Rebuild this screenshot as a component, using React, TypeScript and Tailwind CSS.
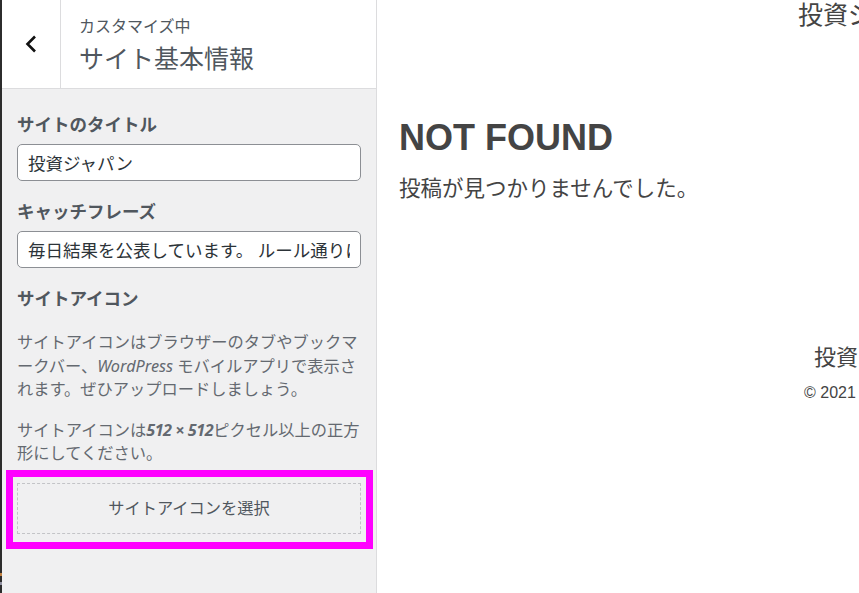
const jp = "font-['Noto_Sans','Noto_Sans_CJK_JP',sans-serif]";

export default function App() {
  return (
    <div className="flex h-[593px] w-[859px] overflow-hidden bg-white">
      {/* strip of the window behind */}
      <div className="flex w-[2px] flex-col justify-end bg-[#2c2c2c] pb-[8px]">
        <div className="h-[3px] bg-[#c08040]" />
        <div className="mt-[6px] h-[3px] bg-[#9090a0]" />
      </div>

      <aside className={`flex w-[375px] shrink-0 flex-col border-r border-[#dcdcde] bg-[#f0f0f1] ${jp}`}>
        <header className="flex h-[89px] border-b border-[#dcdcde] bg-white">
          <button className="flex w-[59px] items-center justify-center border-r border-[#dcdcde] text-black" aria-label="戻る">
            <svg width="12" height="18" viewBox="0 0 12 18" fill="none">
              <polyline points="10,1.5 2.5,9 10,16.5" stroke="#111" strokeWidth="2.6" />
            </svg>
          </button>
          <div className="flex flex-col pl-[18px] pt-[16px] text-[#50575e]">
            <span className="text-[16px] leading-[20px]">カスタマイズ中</span>
            <span className="mt-[6px] text-[25px] leading-[32px]">サイト基本情報</span>
          </div>
        </header>

        <div className="flex flex-col pl-[15px] pr-[9px]">
          <label className="mt-[23px] text-[17.5px] font-bold leading-[24px] text-[#50575e]">サイトのタイトル</label>
          <input
            readOnly
            value="投資ジャパン"
            className="mt-[8px] h-[37px] w-[344px] rounded-[5px] border border-[#8c8f94] bg-white px-[10px] text-[17.5px] text-[#2c3338] outline-none"
          />
          <label className="mt-[18px] text-[17.5px] font-bold leading-[24px] text-[#50575e]">キャッチフレーズ</label>
          <input
            readOnly
            value="毎日結果を公表しています。 ルール通りに投資しています。"
            className="mt-[8px] h-[37px] w-[344px] rounded-[5px] border border-[#8c8f94] bg-white px-[10px] text-[17.5px] text-[#2c3338] outline-none"
          />
          <span className="mt-[18px] text-[17.5px] font-bold leading-[24px] text-[#50575e]">サイトアイコン</span>
          <p className="mt-[21px] text-[16.25px] leading-[23.5px] text-[#646970]">
            サイトアイコンはブラウザーのタブやブックマークバー、<i>WordPress</i> モバイルアプリで表示されます。ぜひアップロードしましょう。
          </p>
          <p className="mt-[17px] text-[16.25px] leading-[23.5px] text-[#646970]">
            サイトアイコンは<b className="tracking-[-0.5px]"><i>512 × 512</i></b>ピクセル以上の正方形にしてください。
          </p>
        </div>

        <div className="ml-[4px] mt-[4px] w-[367px] border-[7px] border-[#ff00ff] pb-[8px] pl-[4px] pr-[5px] pt-[6px]">
          <button className="flex h-[51px] w-full items-center justify-center border border-dashed border-[#c3c4c7] text-[16.25px] text-[#50575e]">
            サイトアイコンを選択
          </button>
        </div>
      </aside>

      <main className="flex min-w-0 flex-1 flex-col overflow-hidden whitespace-nowrap text-[#444]">
        <div className={`pl-[421px] text-[25px] leading-[28px] ${jp}`}>投資ジャパン</div>
        <h1 className="mt-[90px] pl-[22px] font-['Liberation_Sans',Arial,sans-serif] text-[36px] font-bold leading-[40px]">
          NOT FOUND
        </h1>
        <p className={`mt-[14px] pl-[22px] text-[21.5px] leading-[32px] ${jp}`}>投稿が見つかりませんでした。</p>
        <div className={`mt-[137px] pl-[437px] text-[22px] leading-[30px] ${jp}`}>投資ジャパン</div>
        <div className="mt-[12px] pl-[427px] font-['Liberation_Sans',Arial,sans-serif] text-[16px] leading-[20px]">
          © 2021 投資ジャパン
        </div>
      </main>
    </div>
  );
}
